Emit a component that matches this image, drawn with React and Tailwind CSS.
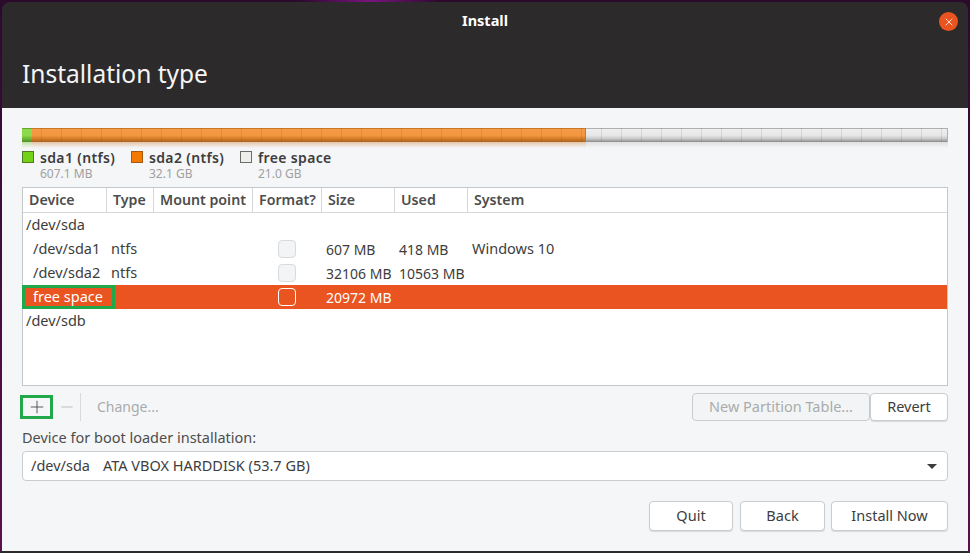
import React from "react";
import { X, Plus, Minus } from "lucide-react";

const columns = "grid-cols-[84px_47px_99px_69px_73px_73px_1fr]";

const headers = ["Device", "Type", "Mount point", "Format?", "Size", "Used", "System"];

const rows = [
  { device: "/dev/sda", top: true },
  { device: "/dev/sda1", type: "ntfs", format: true, size: "607 MB", used: "418 MB", system: "Windows 10" },
  { device: "/dev/sda2", type: "ntfs", format: true, size: "32106 MB", used: "10563 MB" },
  { device: "free space", format: true, size: "20972 MB", selected: true },
  { device: "/dev/sdb", top: true },
];

const legend = [
  { name: "sda1 (ntfs)", size: "607.1 MB", swatch: "bg-[#73d216] border-[#4e7a20]" },
  { name: "sda2 (ntfs)", size: "32.1 GB", swatch: "bg-[#f57900] border-[#a55a14]" },
  { name: "free space", size: "21.0 GB", swatch: "bg-[#eeeeec] border-[#6b6b68]" },
];

const TICKS = "bg-[repeating-linear-gradient(90deg,transparent_0,transparent_19px,rgba(90,50,10,0.13)_19px,rgba(90,50,10,0.13)_20px)]";

const PartitionBar = () => (
  <div className="relative h-[20px] flex items-start">
    <div className="w-[10px] h-full flex flex-col">
      <div className="h-[14px] border-t border-[#6aa62c] bg-[linear-gradient(#8cd94c_0,#8cd94c_50%,#74bd38_70%,#4f8f2a_100%)]" />
      <div className="h-[6px] bg-[linear-gradient(rgba(115,190,40,0.4),transparent)]" />
    </div>
    <div className="w-[554px] h-full flex flex-col">
      <div className="h-[14px] border-t border-r border-[#c9782a] bg-[linear-gradient(#f59c48_0,#f2963f_50%,#d97f2a_72%,#a8631f_100%)]" />
      <div className="h-[6px] bg-[linear-gradient(rgba(205,135,70,0.45),transparent)]" />
    </div>
    <div className="flex-1 h-full flex flex-col">
      <div className="h-[14px] border-t border-r border-[#b0b0b0] bg-[linear-gradient(#efefef_0,#e6e6e6_50%,#c8c8c8_75%,#8c8c8c_100%)]" />
      <div className="h-[6px] bg-[linear-gradient(rgba(170,170,170,0.3),transparent)]" />
    </div>
    <div className={`absolute inset-x-0 top-0 h-[14px] ${TICKS}`} />
  </div>
);

const Legend = () => (
  <div className="flex mt-[1px] h-[38px]">
    {legend.map((item) => (
      <div key={item.name} className="w-[109px] flex items-start gap-[6px]">
        <div className={`w-[12px] h-[12px] mt-[2px] border ${item.swatch}`} />
        <div className="flex flex-col pt-[1px]">
          <span className="text-[14px] leading-[16px] font-semibold tracking-[0.35px] text-[#3d3d3d]">{item.name}</span>
          <span className="text-[12px] leading-[15px] text-[#a0a0a0]">{item.size}</span>
        </div>
      </div>
    ))}
  </div>
);

const PartitionTable = () => (
  <div className="h-[199px] bg-white border border-[#c3c8cc]">
    <div className={`grid ${columns} h-[25px] border-b border-[#d5d8da]`}>
      {headers.map((h, i) => (
        <div key={h} className={`pl-[6px] whitespace-nowrap text-[14.2px] font-semibold leading-[23px] text-[#4d4d4d] ${i < 6 ? "border-r border-[#d5d8da]" : ""}`}>
          {h}
        </div>
      ))}
    </div>
    {rows.map((row) => (
      <div
        key={row.device}
        className={`grid ${columns} h-[24px] items-center text-[14.5px] ${row.selected ? "bg-[#e95420] text-white" : "text-[#3d3d3d]"}`}
      >
        <div className={`relative flex items-center ${row.top ? "pl-[3px]" : "pl-[10px]"} whitespace-nowrap h-full`}>
          {row.device}
          {row.selected && <div className="absolute -left-[1px] inset-y-0 w-[93px] border-[3px] border-[#21a84a]" />}
        </div>
        <div className="pl-[4px]">{row.type}</div>
        <div />
        <div className="flex justify-center">
          {row.format && (
            <div className={`w-[18px] h-[18px] -ml-[2px] rounded-[4px] border ${row.selected ? "border-white bg-[#e95420]" : "border-[#d8dadc] bg-[#f3f4f5]"}`} />
          )}
        </div>
        <div className="pl-[4px] whitespace-nowrap text-[14px]">{row.size}</div>
        <div className="pl-[4px] whitespace-nowrap text-[14px]">{row.used}</div>
        <div className="pl-[4px]">{row.system}</div>
      </div>
    ))}
  </div>
);

const Button = ({ className = "", disabled, children }) => (
  <button
    className={`h-full rounded-[4px] border border-[#c9cdd0] text-[14.5px] ${
      disabled ? "bg-[#f3f4f5] text-[#a9acad]" : "bg-white text-[#3d3d3d] shadow-[0_1px_1px_rgba(0,0,0,0.12)]"
    } ${className}`}
  >
    {children}
  </button>
);

export default function App() {
  return (
    <div className="w-[970px] h-[553px] flex flex-col overflow-hidden font-['Noto_Sans',sans-serif] bg-[radial-gradient(circle_at_370px_0,#7a1480_0,transparent_70px),linear-gradient(#2c0a2c,#5c0f4e)]">
      <div className="flex-1 pt-[2px] pl-[2px]">
        <div className="w-[966px] h-full flex flex-col rounded-t-[8px] overflow-hidden">
          <div className="h-[106px] bg-[#2c2a2b] flex flex-col shrink-0">
            <div className="relative h-[38px] flex items-center justify-center text-[14.5px] font-bold text-white">
              Install
              <div className="absolute right-[10px] top-[10px] w-[19px] h-[19px] rounded-full bg-[#e95420] flex items-center justify-center">
                <X size={12} strokeWidth={1.6} className="text-white" />
              </div>
            </div>
            <h1 className="pl-[20px] mt-[19px] text-[24.5px] leading-[30px] text-[#f5f5f5]">Installation type</h1>
          </div>

          <div className="flex-1 bg-[#f5f6f7] px-[20px] pt-[20px] flex flex-col">
            <PartitionBar />
            <Legend />
            <PartitionTable />

            <div className="flex items-center h-[28px] mt-[7px]">
              <div className="w-[33px] h-[24px] -ml-[2px] border-[3px] border-[#21a84a] flex items-center justify-center text-[#3d3d3d]">
                <Plus size={20} strokeWidth={1} />
              </div>
              <div className="w-[28px] h-full flex items-center justify-center text-[#a9acad] border-r border-[#d8dadc]">
                <Minus size={18} strokeWidth={1} />
              </div>
              <span className="ml-[16px] -mt-[1px] text-[14px] text-[#a9acad]">Change...</span>
              <div className="ml-auto flex h-full">
                <Button disabled className="w-[178px]">New Partition Table...</Button>
                <Button className="w-[78px]">Revert</Button>
              </div>
            </div>

            <label className="mt-[6px] text-[14.5px] leading-[20px] text-[#4d4d4d]">Device for boot loader installation:</label>

            <div className="mt-[4px] h-[30px] bg-white border border-[#c9cdd0] rounded-[4px] flex items-center pl-[8px] pr-[10px] text-[14.5px] text-[#3d3d3d]">
              <span>/dev/sda</span>
              <span className="ml-[13px]">ATA VBOX HARDDISK (53.7 GB)</span>
              <div className="ml-auto w-0 h-0 border-x-[5px] border-x-transparent border-t-[5px] border-t-[#3d3d3d]" />
            </div>

            <div className="mt-[20px] h-[30px] flex justify-end">
              <Button className="w-[84px] mr-[7px]">Quit</Button>
              <Button className="w-[85px] mr-[6px]">Back</Button>
              <Button className="w-[117px]">Install Now</Button>
            </div>
          </div>
        </div>
      </div>
      <div className="h-[2px] shrink-0 bg-[#2c2a2b]" />
    </div>
  );
}
